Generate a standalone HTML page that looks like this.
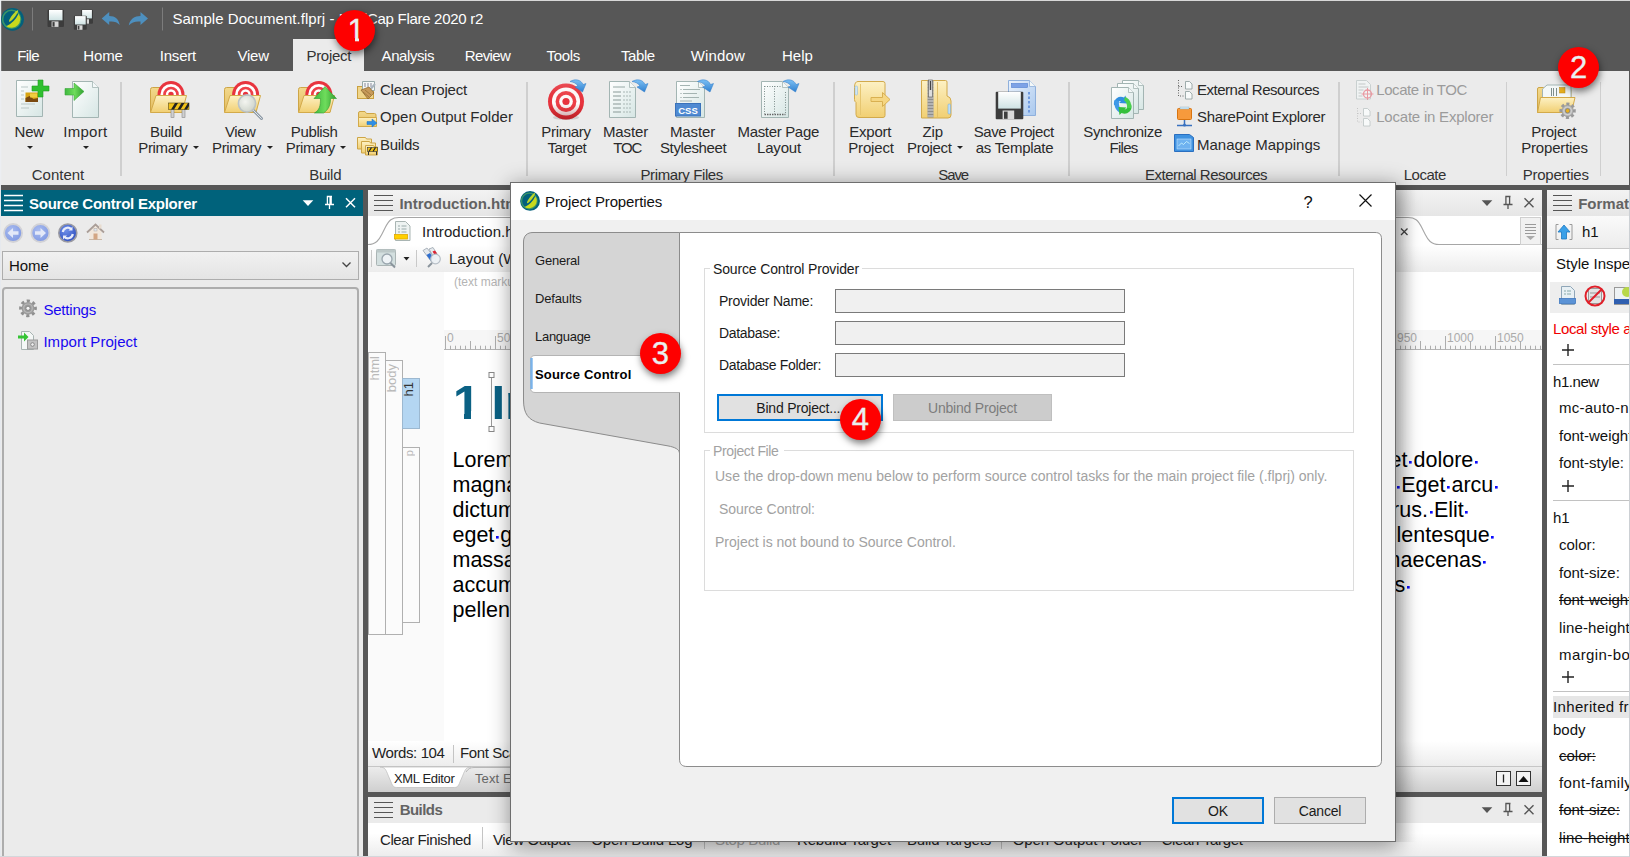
<!DOCTYPE html>
<html><head><meta charset="utf-8"><title>Project Properties</title>
<style>
*{box-sizing:border-box;margin:0;padding:0}
html,body{width:1630px;height:857px;overflow:hidden}
body{background:#575757;font-family:"Liberation Sans",sans-serif;font-size:15px;color:#222;position:relative}
.a{position:absolute;white-space:pre}
.t{position:absolute;white-space:pre;line-height:18px;height:18px}
.c{text-align:center}
#ribbon{left:1px;top:71px;width:1627.500px;height:114px;background:#ebebeb}
.sep{position:absolute;width:2px;background:#cfcfcf;top:82px;height:94px}
.gl{color:#333}
.badge{position:absolute;width:41px;height:41px;border-radius:50%;background:#fe0000;color:#e9f0f0;font-size:31px;line-height:41px;text-align:center;box-shadow:1px 3.500px 7px rgba(0,0,0,.5);-webkit-text-stroke:.35px #e9f0f0}
.badge i{position:absolute;background:#fe0000}
.mi{top:47px;color:#fff}
.bl{color:#2a2a2a}
.d13{font-size:13px;color:#1a1a1a}
.d14{font-size:14px;color:#1a1a1a}
.g{color:#a2a2a2}
.vt{writing-mode:vertical-rl;transform:rotate(180deg);font-size:13px;line-height:17px;text-align:right;white-space:pre}
.p{font-size:21.500px;line-height:25px;color:#000}
.sp{display:inline-block;width:5.950px;height:3px;vertical-align:3.500px;background:linear-gradient(#0c0cff,#0c0cff) center/2.700px 2.600px no-repeat}
.dd{position:absolute;width:0;height:0;border-left:3.300px solid transparent;border-right:3.300px solid transparent;border-top:3.700px solid #222;margin:.3px 0 0 .7px}
</style></head><body>
<!-- TITLEBAR -->
<div class="t" style="left:172.400px;top:10px;color:#fff;letter-spacing:0.05px">Sample Document.flprj - </div><div class="t" style="left:338.700px;top:10px;color:#fff;letter-spacing:-0.29px">MadCap Flare 2020 r2</div>
<!-- MENU -->
<div class="a" style="left:293px;top:39px;width:71px;height:33px;background:#ebebeb"></div>
<div class="t mi" style="left:17.2px;letter-spacing:-0.57px">File</div>
<div class="t mi" style="left:83.2px;letter-spacing:-0.08px">Home</div>
<div class="t mi" style="left:159.7px;letter-spacing:-0.19px">Insert</div>
<div class="t mi" style="left:237.5px;letter-spacing:-0.26px">View</div>
<div class="t mi" style="left:306.4px;color:#333;letter-spacing:-0.27px">Project</div>
<div class="t mi" style="left:381.6px;letter-spacing:-0.43px">Analysis</div>
<div class="t mi" style="left:464.8px;letter-spacing:-0.63px">Review</div>
<div class="t mi" style="left:546.5px;letter-spacing:-0.29px">Tools</div>
<div class="t mi" style="left:621px;letter-spacing:-0.43px">Table</div>
<div class="t mi" style="left:690.7px;letter-spacing:0.16px">Window</div>
<div class="t mi" style="left:782.1px;letter-spacing:-0.06px">Help</div>
<!-- RIBBON -->
<div id="ribbon" class="a"></div>
<div class="sep" style="left:120px;width:2px"></div>
<div class="sep" style="left:526px;width:2px"></div>
<div class="sep" style="left:833px;width:2px"></div>
<div class="sep" style="left:1068px;width:2px"></div>
<div class="sep" style="left:1338px;width:2px"></div>
<div class="sep" style="left:1506px;width:1px"></div>
<div class="sep" style="left:1600px;width:1px"></div>
<div class="t bl" style="left:14.5px;top:123px;letter-spacing:-0.17px">New</div>
<div class="t bl" style="left:63.25px;top:123px;letter-spacing:0.29px">Import</div>
<div class="dd" style="left:26.5px;top:146px"></div>
<div class="dd" style="left:82px;top:146px"></div>
<div class="t bl" style="left:150px;top:123px;letter-spacing:-0.27px">Build</div>
<div class="t bl" style="left:138.25px;top:139px;letter-spacing:-0.35px">Primary</div>
<div class="dd" style="left:192.2px;top:146px"></div>
<div class="t bl" style="left:225px;top:123px;letter-spacing:-0.44px">View</div>
<div class="t bl" style="left:212px;top:139px;letter-spacing:-0.35px">Primary</div>
<div class="dd" style="left:266px;top:146px"></div>
<div class="t bl" style="left:290.75px;top:123px;letter-spacing:-0.35px">Publish</div>
<div class="t bl" style="left:285.75px;top:139px;letter-spacing:-0.35px">Primary</div>
<div class="dd" style="left:339.7px;top:146px"></div>
<div class="t bl" style="left:380px;top:81px;letter-spacing:-0.25px">Clean Project</div>
<div class="t bl" style="left:380px;top:108px;letter-spacing:0.02px">Open Output Folder</div>
<div class="t bl" style="left:380px;top:136px;letter-spacing:-0.27px">Builds</div>
<div class="t bl" style="left:541.25px;top:123px;letter-spacing:-0.31px">Primary</div>
<div class="t bl" style="left:547.5px;top:139px;letter-spacing:-0.49px">Target</div>
<div class="t bl" style="left:603px;top:123px;letter-spacing:-0.14px">Master</div>
<div class="t bl" style="left:613.25px;top:139px;letter-spacing:-1.20px">TOC</div>
<div class="t bl" style="left:670px;top:123px;letter-spacing:-0.14px">Master</div>
<div class="t bl" style="left:660px;top:139px;letter-spacing:-0.38px">Stylesheet</div>
<div class="t bl" style="left:737.5px;top:123px;letter-spacing:-0.33px">Master Page</div>
<div class="t bl" style="left:757px;top:139px;letter-spacing:-0.17px">Layout</div>
<div class="t bl" style="left:849.25px;top:123px;letter-spacing:-0.23px">Export</div>
<div class="t bl" style="left:848.25px;top:139px;letter-spacing:-0.17px">Project</div>
<div class="t bl" style="left:922.5px;top:123px;letter-spacing:-0.11px">Zip</div>
<div class="t bl" style="left:907px;top:139px;letter-spacing:-0.28px">Project</div>
<div class="dd" style="left:956.7px;top:146px"></div>
<div class="t bl" style="left:973.75px;top:123px;letter-spacing:-0.42px">Save Project</div>
<div class="t bl" style="left:975.75px;top:139px;letter-spacing:-0.28px">as Template</div>
<div class="t bl" style="left:1083.25px;top:123px;letter-spacing:-0.35px">Synchronize</div>
<div class="t bl" style="left:1109.5px;top:139px;letter-spacing:-0.73px">Files</div>
<div class="t bl" style="left:1197px;top:81px;letter-spacing:-0.49px">External Resources</div>
<div class="t bl" style="left:1197px;top:108px;letter-spacing:-0.32px">SharePoint Explorer</div>
<div class="t bl" style="left:1197px;top:136px;letter-spacing:-0.01px">Manage Mappings</div>
<div class="t" style="left:1376.25px;top:81px;color:#9b9b9b;letter-spacing:-0.42px">Locate in TOC</div>
<div class="t" style="left:1376.25px;top:108px;color:#9b9b9b;letter-spacing:-0.22px">Locate in Explorer</div>
<div class="t bl" style="left:1531.25px;top:123px;letter-spacing:-0.24px">Project</div>
<div class="t bl" style="left:1521.25px;top:139px;letter-spacing:-0.19px">Properties</div>
<div class="t gl" style="left:31.75px;top:165.700px;letter-spacing:-0.01px">Content</div>
<div class="t gl" style="left:309.25px;top:165.700px;letter-spacing:-0.27px">Build</div>
<div class="t gl" style="left:640.5px;top:165.700px;letter-spacing:-0.39px">Primary Files</div>
<div class="t gl" style="left:938.25px;top:165.700px;letter-spacing:-1.11px">Save</div>
<div class="t gl" style="left:1145px;top:165.700px;letter-spacing:-0.49px">External Resources</div>
<div class="t gl" style="left:1403.75px;top:165.700px;letter-spacing:-0.51px">Locate</div>
<div class="t gl" style="left:1522.75px;top:165.700px;letter-spacing:-0.24px">Properties</div>

<svg class="a" style="left:0;top:0" width="1630" height="185" viewBox="0 0 1630 185">
<defs>
<linearGradient id="gp" x1="0" y1="0" x2="1" y2="1"><stop offset="0" stop-color="#ffffff"/><stop offset="1" stop-color="#d6e6e4"/></linearGradient>
<linearGradient id="gf" x1="0" y1="0" x2="0" y2="1"><stop offset="0" stop-color="#fdf1c4"/><stop offset="1" stop-color="#f1cf72"/></linearGradient>
<linearGradient id="gfb" x1="0" y1="0" x2="0" y2="1"><stop offset="0" stop-color="#f3d98c"/><stop offset="1" stop-color="#e2bb5e"/></linearGradient>
<linearGradient id="gg" x1="0" y1="0" x2="1" y2="0"><stop offset="0" stop-color="#3fb83f"/><stop offset=".5" stop-color="#6fdc5c"/><stop offset="1" stop-color="#2fa02f"/></linearGradient>
<linearGradient id="gb" x1="0" y1="0" x2="0" y2="1"><stop offset="0" stop-color="#7cc0f4"/><stop offset="1" stop-color="#2f80d0"/></linearGradient>
<linearGradient id="gbl" x1="0" y1="0" x2="1" y2="1"><stop offset="0" stop-color="#eaf2fc"/><stop offset="1" stop-color="#a9c8ee"/></linearGradient>
<linearGradient id="gw" x1="0" y1="0" x2="0" y2="1"><stop offset="0" stop-color="#ffffff"/><stop offset="1" stop-color="#cfe3e4"/></linearGradient>
<linearGradient id="gs" x1="0" y1="0" x2="0" y2="1"><stop offset="0" stop-color="#fff" stop-opacity=".12"/><stop offset=".55" stop-color="#800" stop-opacity="0"/><stop offset="1" stop-color="#600" stop-opacity=".38"/></linearGradient>
<radialGradient id="gm" cx=".4" cy=".4" r=".6"><stop offset="0" stop-color="#f4f6f4"/><stop offset="1" stop-color="#cfd6d0"/></radialGradient>
<clipPath id="ctop"><rect x="0" y="0" width="1630" height="96"/></clipPath>
</defs>
<rect x="0" y="0" width="1630" height="1" fill="#d8d8d8"/><rect x="0" y="0" width="1.200" height="185" fill="#eceef2"/>
<circle cx="12.500" cy="19.300" r="11.400" fill="#03607c"/><circle cx="11.600" cy="19.300" r="9" fill="none" stroke="#3b9467" stroke-width="1.600"/>
<path d="M6.300 26.200Q14.500 22.500 18.600 13.800A8.850 8.850 0 0 1 6.300 26.200z" fill="#c8d91d"/><ellipse cx="13.600" cy="16" rx="7.300" ry="1.550" transform="rotate(-52 13.600 16)" fill="#bcd62a"/>
<path d="M32.500 7.500v23M162.500 7.500v23" stroke="#7c7c7c" stroke-width="1"/>
<rect x="47.5" y="9.7" width="16.5" height="17.2" rx="1" fill="#3c3c3c"/><rect x="49.0" y="10.0" width="13.5" height="10.3" fill="url(#gw)"/><rect x="51.6" y="21.4" width="6.9" height="5.5" fill="#d8d8d8"/><rect x="52.5" y="22.1" width="2.1" height="4.5" fill="#3c3c3c"/>
<rect x="81" y="9.7" width="12" height="14" rx="1" fill="#3c3c3c"/><rect x="82.1" y="10.0" width="9.8" height="8.4" fill="url(#gw)"/><rect x="84.0" y="19.2" width="5.0" height="4.5" fill="#d8d8d8"/><rect x="84.6" y="19.8" width="1.6" height="3.6" fill="#3c3c3c"/>
<rect x="73.8" y="15.8" width="13" height="14" rx="1" fill="#3c3c3c"/><rect x="75.0" y="16.1" width="10.7" height="8.4" fill="url(#gw)"/><rect x="77.0" y="25.3" width="5.5" height="4.5" fill="#d8d8d8"/><rect x="77.7" y="25.9" width="1.7" height="3.6" fill="#3c3c3c"/>
<path d="M101.700 18.500l7.500-6.500v4c6 0 9.500 3 10.500 9c-2.500-3-6-4-10.500-3.500v3.500z" fill="#4d8fbe"/>
<path d="M148 18.500l-7.500-6.500v4c-6 0-10.500 3-11.800 9.500c3-3.500 7-4.500 11.800-4v3.500z" fill="#4d8fbe"/>
<path d="M16.5 80.5h26l0 0v36h-26z" fill="url(#gp)" stroke="#a3b5b3"/><path d="M42.5 80.5v0h0" fill="#f4f8f8" stroke="#a3b5b3" stroke-width=".8"/>
<path d="M21 87h7M21 91h3M21 95h3M21 99h3M21 104h14M21 108h8" stroke="#b9c7c6" stroke-width="1"/>
<rect x="25.500" y="92.500" width="12.500" height="9.500" fill="#d9a514"/><path d="M25.500 102v-4l4-2 4 3 4.500-1v4z" fill="#7a4a10"/><rect x="30" y="93.500" width="7" height="4" fill="#f6d84a" opacity=".8"/>
<path d="M38 80h5v6h6v5h-6v6h-5v-6h-6v-5h6z" fill="#2fc02f" stroke="#1f9a1f" stroke-width=".6"/>
<path d="M72.5 81.5h20l6 6v30h-26z" fill="url(#gp)" stroke="#a3b5b3"/><path d="M92.5 81.5v6h6" fill="#f4f8f8" stroke="#a3b5b3" stroke-width=".8"/>
<path d="M65 88.500h9v-5.500l10 8.500-10 9v-5.500h-9z" fill="url(#gg)" stroke="#3aa83a" stroke-width=".6"/>
<path d="M150.5 89.5q0-2 2-2h8l2.500 3h17q2 0 2 2v19.5h-31.5z" fill="url(#gfb)" stroke="#cda546"/>
<g clip-path="url(#ctop)"><circle cx="171" cy="94.5" r="13.50" fill="#e8343e"/><circle cx="171" cy="94.5" r="10.53" fill="#fff"/><circle cx="171" cy="94.5" r="7.83" fill="#ee4048"/><circle cx="171" cy="94.5" r="5.13" fill="#fff"/><circle cx="171" cy="94.5" r="2.70" fill="#e8343e"/></g>
<path d="M150.5 112.5l5.500-17.0h30.5l-4.500 17.0z" fill="url(#gf)" stroke="#d3aa4a"/>
<rect x="171" y="109" width="3" height="8.500" fill="#d0d0d0" stroke="#888" stroke-width=".6"/><rect x="182" y="109" width="3" height="8.500" fill="#d0d0d0" stroke="#888" stroke-width=".6"/>
<rect x="168.500" y="103" width="20.500" height="6.500" fill="#f2c21a" stroke="#5a4a10" stroke-width=".6"/><path d="M171 109.500l4-6.500h3l-4 6.500zM177.500 109.500l4-6.500h3l-4 6.500zM184 109.500l4-6.500h1v3l-2 3.500z" fill="#222"/>
<path d="M224.5 89.5q0-2 2-2h8l2.500 3h17q2 0 2 2v19.5h-31.5z" fill="url(#gfb)" stroke="#cda546"/>
<g clip-path="url(#ctop)"><circle cx="245.6" cy="94.5" r="13.50" fill="#e8343e"/><circle cx="245.6" cy="94.5" r="10.53" fill="#fff"/><circle cx="245.6" cy="94.5" r="7.83" fill="#ee4048"/><circle cx="245.6" cy="94.5" r="5.13" fill="#fff"/><circle cx="245.6" cy="94.5" r="2.70" fill="#e8343e"/></g>
<path d="M224.5 112.5l5.500-17.0h30.5l-4.500 17.0z" fill="url(#gf)" stroke="#d3aa4a"/>
<path d="M253 110l8.500 8.500" stroke="#8e9aa6" stroke-width="3" stroke-linecap="round"/><path d="M253 110l8.500 8.500" stroke="#dfe5ea" stroke-width="1" stroke-linecap="round"/><circle cx="247" cy="103.500" r="8.600" fill="url(#gm)" stroke="#b9c2c8" stroke-width="1.600" opacity=".96"/>
<path d="M298.5 89.5q0-2 2-2h8l2.500 3h17q2 0 2 2v19.5h-31.5z" fill="url(#gfb)" stroke="#cda546"/>
<g clip-path="url(#ctop)"><circle cx="318.8" cy="94.5" r="13.50" fill="#e8343e"/><circle cx="318.8" cy="94.5" r="10.53" fill="#fff"/><circle cx="318.8" cy="94.5" r="7.83" fill="#ee4048"/><circle cx="318.8" cy="94.5" r="5.13" fill="#fff"/><circle cx="318.8" cy="94.5" r="2.70" fill="#e8343e"/></g>
<path d="M298.5 112.5l5.500-17.0h30.5l-4.500 17.0z" fill="url(#gf)" stroke="#d3aa4a"/>
<path d="M314 98.500l11-12 11.500 12h-6c0 7-2 11-7 14.500h-9c5-3 6-7 6-14.500z" fill="url(#gg)" stroke="#2f9a2f" stroke-width=".6"/>
<rect x="357.500" y="86.500" width="16" height="12" fill="#f0d58a" stroke="#c9a040"/><path d="M362.500 81.500h12v9h-12z" fill="#f4f8f8" stroke="#9aa"/><path d="M365 83v4M368 83v4M371 83v4" stroke="#889"/>
<path d="M375 84l-7 8" stroke="#a9b4be" stroke-width="2"/><path d="M361 90l8-3 5 6-6 6z" fill="#c79a5a" stroke="#8a6428" stroke-width=".7"/><path d="M363 92l6 5M365 90l6 5" stroke="#8a6428" stroke-width=".6"/>
<path d="M358.500 113q0-1.500 1.500-1.500h5l1.500 2h8q1.500 0 1.500 1.500v11.500h-17.500z" fill="url(#gfb)" stroke="#cda546"/><path d="M358.500 126.500v-9h18v9z" fill="url(#gf)" stroke="#d3aa4a"/>
<path d="M367 121.500h5v-2.500l5 4-5 4v-2.500h-5z" fill="#2e8fe6" stroke="#1c6fc0" stroke-width=".5"/>
<path d="M357.500 137.500h8l1 1.500h5v10h-14z" fill="url(#gf)" stroke="#cda546"/><path d="M361.500 141.500h8l1 1.500h5v10h-14z" fill="url(#gf)" stroke="#cda546"/><path d="M365.500 145.500h8l1 1.500h3v8h-12z" fill="url(#gf)" stroke="#cda546"/>
<rect x="367.500" y="147.500" width="10" height="4" fill="#f2c21a" stroke="#333" stroke-width=".6"/><path d="M369 151.500l2.500-4M373 151.500l2.500-4" stroke="#222" stroke-width="1.200"/><path d="M368.500 151.500v3.500M376.500 151.500v3.500" stroke="#333"/>
<ellipse cx="566" cy="117.500" rx="13" ry="2.500" fill="#000" opacity=".12"/>
<g><circle cx="566" cy="101.5" r="18.00" fill="#e8343e"/><circle cx="566" cy="101.5" r="14.04" fill="#fff"/><circle cx="566" cy="101.5" r="10.44" fill="#ee4048"/><circle cx="566" cy="101.5" r="6.84" fill="#fff"/><circle cx="566" cy="101.5" r="3.60" fill="#e8343e"/></g>
<circle cx="566" cy="101.500" r="18" fill="url(#gs)"/>
<path d="M570 81.5c5-3 11-2 13 3l3-1-3.500 8.500-7.500-5 3-1c-2-3-5-4-8-4.500z" fill="url(#gb)" stroke="#2a78c8" stroke-width=".5"/>
<path d="M609.5 81.5h20l6 6v30h-26z" fill="url(#gp)" stroke="#a3b5b3"/><path d="M629.5 81.5v6h6" fill="#f4f8f8" stroke="#a3b5b3" stroke-width=".8"/>
<path d="M613 87h12" stroke="#97a8a6"/><path d="M613 92h8M613 96h8M613 100h8M613 104h8M613 108h8M613 112h8" stroke="#8a9a98" stroke-width="1.200"/><path d="M623 92h9M623 96h9M623 100h9M623 104h9M623 108h9M623 112h9" stroke="#a8b6b4" stroke-dasharray="2 1"/>
<path d="M632 81.5c5-3 11-2 13 3l3-1-3.500 8.500-7.500-5 3-1c-2-3-5-4-8-4.500z" fill="url(#gb)" stroke="#2a78c8" stroke-width=".5"/>
<path d="M676.5 81.5h22l6 6v30h-28z" fill="url(#gp)" stroke="#a3b5b3"/><path d="M698.5 81.5v6h6" fill="#f4f8f8" stroke="#a3b5b3" stroke-width=".8"/>
<path d="M680 85.500h10M683 89.500h17M683 93.500h14M683 97.500h16M680 101h12" stroke="#a4b4b2"/><path d="M680.500 89.500h1M680.500 93.500h1M680.500 97.500h1" stroke="#899"/>
<rect x="675.500" y="103.500" width="25" height="12.500" fill="#4f8ad2" stroke="#3a72ba"/><text x="688" y="113.500" font-family="Liberation Sans,sans-serif" font-size="9.500" fill="#fff" text-anchor="middle" font-weight="700">CSS</text>
<path d="M697.5 81.5c5-3 11-2 13 3l3-1-3.500 8.500-7.500-5 3-1c-2-3-5-4-8-4.500z" fill="url(#gb)" stroke="#2a78c8" stroke-width=".5"/>
<path d="M761.5 81.5h21l6 6v30h-27z" fill="url(#gp)" stroke="#a3b5b3"/><path d="M782.5 81.5v6h6" fill="#f4f8f8" stroke="#a3b5b3" stroke-width=".8"/>
<path d="M764.500 86v28M774.500 86v28M785.500 92v22M764.500 86.500h16" stroke="#7f8f8d" stroke-dasharray="1 1.500" fill="none"/><path d="M764.500 114.500h21" stroke="#666" stroke-dasharray="1.500 1" stroke-width="1.500"/>
<path d="M783 81.5c5-3 11-2 13 3l3-1-3.500 8.500-7.500-5 3-1c-2-3-5-4-8-4.500z" fill="url(#gb)" stroke="#2a78c8" stroke-width=".5"/>
<path d="M858 81.500h25q2 0 2 2v32q0 2-2 2h-24q-3 0-3-3v-12q-1.500-1-1.500-3v-12q0-6 3.500-6z" fill="url(#gf)" stroke="#d2aa4c"/><path d="M860.500 84v31" stroke="#e6c670"/>
<rect x="855" y="86" width="2.500" height="9" rx="1" fill="#cfe6f6" stroke="#8ab4d6" stroke-width=".5"/>
<path d="M871 97.500h11.500v-5l7.500 7-7.500 7v-5h-11.500z" fill="#f5d682" stroke="#d9b050"/>
<path d="M921.500 80.500h24q1.500 0 1.500 1.500v14q4 1 4 5v14q0 3-3 3h-26.500z" fill="url(#gf)" stroke="#d2aa4c"/><path d="M937.500 82v35" stroke="#e2c068"/>
<rect x="927.500" y="80.500" width="6" height="37" fill="#8d8d8d"/><path d="M927.500 83h6M927.500 86h6M927.500 89h6M927.500 92h6M927.500 95h6M927.500 98h6M927.500 101h6M927.500 104h6M927.500 107h6M927.500 110h6M927.500 113h6M927.500 116h6" stroke="#d9d9d9"/><rect x="928.500" y="80" width="4" height="17" fill="#ddd" stroke="#666" stroke-width=".7"/><path d="M930.500 81v9" stroke="#444" stroke-width="1.400"/>
<rect x="948" y="104" width="2.500" height="10" rx="1" fill="#bfe0f8" stroke="#6aa4d6" stroke-width=".5"/>
<path d="M1008.5 80.5h21l6 6v29h-27z" fill="url(#gbl)" stroke="#8fb0dc"/><path d="M1029.5 80.5v6h6" fill="#f4f8f8" stroke="#8fb0dc" stroke-width=".8"/>
<rect x="1011.500" y="83.500" width="16" height="4" fill="#7da2e6" stroke="#4f7fd0" stroke-width=".6"/><path d="M1015 92v22M1022 92v22M1029 92v22" stroke="#6f9ae0" stroke-width="2" stroke-dasharray="2.500 2"/>
<rect x="995.7" y="91.7" width="27.6" height="27.6" rx="1" fill="#3c3c3c"/><rect x="998.2" y="92.0" width="22.6" height="16.6" fill="url(#gw)"/><rect x="1002.6" y="110.5" width="11.6" height="8.8" fill="#d8d8d8"/><rect x="1004.0" y="111.6" width="3.6" height="7.2" fill="#3c3c3c"/>
<path d="M1122.5 80.5h16l5 5v24h-21z" fill="url(#gp)" stroke="#a3b5b3"/><path d="M1138.5 80.5v5h5" fill="#f4f8f8" stroke="#a3b5b3" stroke-width=".8"/>
<path d="M1117.5 83.5h16l5 5v25h-21z" fill="url(#gp)" stroke="#a3b5b3"/><path d="M1133.5 83.5v5h5" fill="#f4f8f8" stroke="#a3b5b3" stroke-width=".8"/>
<path d="M1111.5 87.5h17l5 5v26h-22z" fill="url(#gp)" stroke="#a3b5b3"/><path d="M1128.5 87.5v5h5" fill="#f4f8f8" stroke="#a3b5b3" stroke-width=".8"/>
<path d="M1114 105a7 7 0 0 1 10-7.500l1.500-2 1.500 8-8-.5 2-2a4 4 0 0 0-4 4.500z" fill="#2f8fe0"/><path d="M1114.500 100c-1 5 1 11 6 13l1-4c-2-1-3-4-2.500-8z" fill="#3f9ae8"/>
<path d="M1131 104a7 7 0 0 1-9.500 9l-2 2-1-8 8 .5-2 2a4 4 0 0 0 3-4.500z" fill="#34c03c"/><path d="M1131 108c1-5-2-10-6-11l-1 3.500c2 1 3.500 4 3 7.500z" fill="#4ad04e"/>
<path d="M1178.500 80v16h5M1178.500 86.500h5" stroke="#666" stroke-dasharray="1 1.500" fill="none"/>
<path d="M1185.500 81.500h4l2.500 2.500v5h-6.500z" fill="#f8fafa" stroke="#8a9a9a" stroke-width=".8"/><path d="M1185.500 91.500h4l2.500 2.500v5h-6.500z" fill="#f8fafa" stroke="#8a9a9a" stroke-width=".8"/>
<rect x="1177.500" y="108.500" width="14" height="11" rx="1" fill="#f79a3c" stroke="#d87410"/><rect x="1180" y="107" width="9" height="2" fill="#cfe8f8" stroke="#8ab" stroke-width=".4"/><path d="M1184.500 120v4M1177 125.500h15" stroke="#3a72c0" stroke-width="1.500"/><circle cx="1184.500" cy="125" r="1.500" fill="#3a72c0"/>
<path d="M1174.500 134.500h15l4 3v14h-19z" fill="#3f92e0" stroke="#2a6fc0"/><rect x="1177" y="139" width="14" height="10" fill="#6fb2f0" stroke="#bfe0ff" stroke-width=".6"/><path d="M1178.500 146l3-3 2 1.500 3-3 3 2" stroke="#dff" stroke-width=".7" fill="none"/>
<path d="M1356.500 80.500h10l4 4v14.500h-14z" fill="#f0f3f3" stroke="#c9d0d0"/><path d="M1358.500 84h7M1358.500 87h10M1358.500 90h5M1358.500 93h3M1358.500 96h4" stroke="#c4caca" stroke-width="1.200"/>
<circle cx="1367.500" cy="94" r="4" fill="none" stroke="#e99aa2" stroke-width="1.300"/><path d="M1367.500 88v12M1361.500 94h12" stroke="#e99aa2" stroke-width="1"/>
<path d="M1357.500 108v14h4M1357.500 113.500h4" stroke="#c4c4c4" stroke-dasharray="1 1.500" fill="none"/>
<path d="M1363.500 108.500h4l2.500 2.500v5h-6.500z" fill="#f8fafa" stroke="#bcc4c4" stroke-width=".8"/><path d="M1363.500 118.500h4l2.500 2.500v5h-6.500z" fill="#f8fafa" stroke="#bcc4c4" stroke-width=".8"/>
<path d="M1537.500 112.500v-23.500q0-1.500 1.500-1.500h4.500l1.500 2h26v23z" fill="url(#gfb)" stroke="#cda546"/>
<path d="M1542.500 101v-12l4.500-4h24v16z" fill="#f4f8f8" stroke="#a3b5b3"/><path d="M1551.500 88v8M1553.500 88v8M1556.500 88v8" stroke="#7f8f8d"/><path d="M1549 98.500h20" stroke="#9aa" stroke-dasharray="1.500 1"/><rect x="1559.500" y="87.500" width="5.500" height="5.500" fill="#e8b020" stroke="#b88410" stroke-width=".5"/>
<path d="M1537.500 112.500l3-15h34.500l-3.500 15z" fill="url(#gf)" stroke="#d3aa4a"/>
<circle cx="1567.600" cy="110.800" r="6.600" fill="none" stroke="#9a9a9a" stroke-width="3.200" stroke-dasharray="2.900 2.280" transform="rotate(-12 1567.600 110.800)"/><circle cx="1567.600" cy="110.800" r="5.800" fill="#b4b4b4" stroke="#8e8e8e" stroke-width=".6"/><circle cx="1567.600" cy="110.800" r="3.800" fill="none" stroke="#d2d2d2" stroke-width="1.200"/><circle cx="1567.600" cy="110.800" r="2.200" fill="#e8b020" stroke="#7a7a7a" stroke-width=".7"/>
</svg>

<div class="a" id="leftborder" style="left:0;top:185px;width:1.200px;height:672px;background:#e6e9ee"></div>
<!-- LEFT PANEL -->
<div class="a" style="left:1px;top:190px;width:362px;height:667px;background:#ebebeb"></div>
<div class="a" style="left:1px;top:190px;width:362px;height:26px;background:#00627b"></div>
<svg class="a" style="left:0;top:185px" width="364" height="70" viewBox="0 185 364 70">
 <g stroke="#fff" stroke-width="1.3"><path d="M4 195.5h19M4 200.5h19M4 205.5h19M4 210.5h19"/></g>
 <path d="M302.700 200.200h10.600l-5.300 5.800z" fill="#fff"/>
 <g stroke="#fff" stroke-width="1.3" fill="none"><path d="M326.8 196.5h5.200M327.4 196.5v8M331.1 196.5v8M325 204.5h9M329.5 204.5v4.600"/><path d="M330.4 196.5v8" stroke-width="2"/><path d="M346 198.300l9 9M355 198.300l-9 9" stroke-width="1.5"/></g>
 <defs><radialGradient id="bb" cx=".4" cy=".35" r=".7"><stop offset="0" stop-color="#a9bcf0"/><stop offset="1" stop-color="#7f98e2"/></radialGradient>
 <radialGradient id="bb2" cx=".4" cy=".35" r=".7"><stop offset="0" stop-color="#6f8fe8"/><stop offset="1" stop-color="#2f4fc0"/></radialGradient></defs>
 <circle cx="13.100" cy="233" r="9" fill="url(#bb)" stroke="#d2d2d6" stroke-width="1.800"/>
 <path d="M7.500 233l5.500-5v3.200h5.500v3.600h-5.500v3.200z" fill="#e4e9f8"/>
 <circle cx="40.400" cy="233" r="9" fill="url(#bb)" stroke="#d2d2d6" stroke-width="1.800"/>
 <path d="M46 233l-5.500-5v3.200h-5.500v3.600h5.500v3.200z" fill="#e4e9f8"/>
 <circle cx="67.800" cy="233" r="9" fill="url(#bb2)" stroke="#9a9aa2" stroke-width="1.600"/>
 <path d="M62.800 232a5 5 0 0 1 8.500-2.800M72.800 234a5 5 0 0 1-8.500 2.800" stroke="#e8ecfa" stroke-width="2.200" fill="none"/><path d="M72.500 226.500v4h-4zM63 239.500v-4h4z" fill="#e8ecfa"/>
 <path d="M89.500 231v8.500h12v-8.500l-6-5.500z" fill="#f1e7dc"/><path d="M87 232.500l8.500-8 8.500 8" fill="none" stroke="#aa9e98" stroke-width="1.800"/><rect x="99" y="224.500" width="2.500" height="4" fill="#e8dccf"/><path d="M89 239.500h13" stroke="#c9b8a8"/>
 <rect x="93.500" y="233.500" width="4" height="6" fill="#d3a683"/><rect x="94" y="228.500" width="3" height="2.500" fill="#dfe6f0" stroke="#b0a8a0" stroke-width=".5"/>
</svg>
<div class="t" style="left:29px;top:195px;color:#fff;font-weight:700;letter-spacing:-.24px">Source Control Explorer</div>
<div class="a" style="left:2px;top:251px;width:357px;height:28.500px;border:1px solid #adadad;background:linear-gradient(#f1f1f1,#e4e4e4)"></div>
<div class="t" style="left:9px;top:257px;color:#111;letter-spacing:-.05px">Home</div>
<svg class="a" style="left:341px;top:261px" width="12" height="8"><path d="M1.500 1.500l4 4 4-4" stroke="#444" stroke-width="1.300" fill="none"/></svg>
<div class="a" style="left:2px;top:287px;width:357px;height:580px;border:2px solid #adadad;border-radius:4px;background:#ebebeb"></div>
<div class="t" style="left:43.400px;top:300.500px;color:#1808f0;letter-spacing:-0.19px">Settings</div>
<div class="t" style="left:43.400px;top:332.800px;color:#1808f0;letter-spacing:0.04px">Import Project</div>
<svg class="a" style="left:17px;top:297px" width="24" height="60" viewBox="17 297 24 60">
 <circle cx="28" cy="308.300" r="7.300" fill="none" stroke="#909090" stroke-width="3.200" stroke-dasharray="3 2.730" transform="rotate(-11 28 308.300)"/><circle cx="28" cy="308.300" r="6.400" fill="#9c9c9c"/><circle cx="28" cy="308.300" r="4.300" fill="none" stroke="#b9b9b9" stroke-width="1.200"/><circle cx="28" cy="308.300" r="2.100" fill="#f4f4f4" stroke="#7a7a7a" stroke-width=".8"/>
 <path d="M21.500 331.500h8l4 4v14h-12z" fill="#f4f7f6" stroke="#a8b4b2"/>
 <rect x="27.500" y="340" width="10" height="9" fill="#c2c2c2" stroke="#9a9a9a"/>
 <circle cx="32.500" cy="344.500" r="1.800" fill="#eee" stroke="#777" stroke-width=".8"/>
 <path d="M18 335.500h6v-3l4.500 4.500-4.500 4.500v-3h-6z" fill="#35c435"/>
</svg>
<!-- EDITOR PANEL -->
<div class="a" style="left:368px;top:190px;width:1174px;height:602px;background:#fff"></div>
<div class="a" style="left:368px;top:190px;width:1174px;height:26px;background:linear-gradient(#f3f3f3,#e6e6e6)"></div>
<div class="t" style="left:399.400px;top:194.500px;color:#636363;font-weight:700;font-size:15px">Introduction.htm</div>
<div class="a" style="left:368px;top:216px;width:1174px;height:29px;background:#fff;border-bottom:1px solid #c4caca"></div>
<svg class="a" style="left:368px;top:190px" width="1174" height="84" viewBox="368 190 1174 84">
 <g stroke="#555" stroke-width="1.200"><path d="M374 195.500h19M374 200.500h19M374 205.500h19M374 210.500h19"/></g>
 <path d="M368 245v-1c8 0 11-4 14-10l3-6c4-8 7-10.500 14-10.500h1009c7 0 10 2.500 14 10.500l3 6c3 6 6 10 14 10h0v1z" fill="#fff"/>
 <path d="M368 244.500c8 0 11-4.500 14-10.500l3-6c4-8 7-10.500 14-10.500h1009c7 0 10 2.500 14 10.500l3 6c3 6 6 10.500 14 10.500h81" fill="none" stroke="#a6a6a6" stroke-width="1.100"/>
 <path d="M395.500 221.500h10l4.500 4.500v14.500h-14.500z" fill="#eef3f2" stroke="#a9b5b3"/>
 <path d="M398 226h2M401.500 226h5M398 229h2M401.500 229h5M398 232h2M401.500 232h5" stroke="#9aa" stroke-width="1"/>
 <rect x="394.500" y="234.500" width="13" height="4.500" fill="#ffd000" stroke="#e0a800" stroke-width=".8"/>
 <path d="M1401 228.500l6.500 6.500M1407.500 228.500l-6.500 6.500" stroke="#444" stroke-width="1.300"/>
 <rect x="1520.500" y="217.500" width="20" height="27" fill="#f1f1f1" stroke="#cfcfcf"/>
 <path d="M1525 224.500h11M1525 227.500h11M1525 230.500h11M1525 233.500h11" stroke="#9a9a9a"/><path d="M1526 236h9l-4.500 4z" fill="#aaa"/>
 <path d="M1481.700 200.200h10.600l-5.300 5.800z" fill="#555"/>
 <g stroke="#555" stroke-width="1.300" fill="none"><path d="M1505.3 196.5h5.200M1505.9 196.5v8M1509.6 196.5v8M1503.5 204.5h9M1508 204.5v4.600"/><path d="M1524.500 198.300l9 9M1533.500 198.300l-9 9" stroke-width="1.400"/></g>
</svg>
<div class="t" style="left:422px;top:222.500px;color:#222;letter-spacing:0.06px">Introduction.htm</div>
<div class="a" style="left:368px;top:245px;width:1174px;height:27px;background:linear-gradient(#fff,#ececec)"></div>
<svg class="a" style="left:368px;top:245px" width="80" height="27" viewBox="368 245 80 27">
 <path d="M371.500 250v17M416.500 250v17" stroke="#c9c9c9"/>
 <rect x="376.500" y="249.500" width="19" height="16" rx="1" fill="#d3dfdf" stroke="#aab4b4"/><rect x="376.500" y="249.500" width="19" height="3" fill="#bcc8c8"/>
 <circle cx="387" cy="259" r="5" fill="#eef3f6" stroke="#9aa6ae" stroke-width="1.300"/><path d="M390.500 263l4.500 4.500" stroke="#8a949c" stroke-width="2"/>
 <path d="M403.500 257h6l-3 3.500z" fill="#222"/>
 <path d="M423 250.500l4-2.500 9 12-4 2.500z" fill="#e6eaee" stroke="#9aa4ae" stroke-width=".8"/><path d="M426.500 255l3.500-2 4 5.500-3.500 2z" fill="#2f6fd0"/>
 <path d="M429 249l4-1.500 5 8-4 2z" fill="#e6eaee" stroke="#9aa4ae" stroke-width=".8"/><path d="M432.500 251.500l2.500-1 2 3-2.500 1.200z" fill="#e02030"/>
 <circle cx="435.500" cy="259" r="4.800" fill="#eef2f6" stroke="#b4bcc4" stroke-width="1.200" opacity=".95"/><path d="M432 263l-4 4" stroke="#8a949c" stroke-width="2"/>
</svg>
<div class="t" style="left:449px;top:250px;color:#222">Layout (Web)</div>
<div class="t" style="left:454px;top:273px;color:#b4b4b4;font-size:12px">(text markup hidden)</div>
<div class="a" style="left:444px;top:330px;width:1098px;height:20px;background:#f6f6f6;border-bottom:1px solid #b5b5b5"></div>
<svg class="a" style="left:0;top:330px" width="1630" height="20" viewBox="0 330 1630 20"><path d="M445.5 349.5v-13.5M450.5 349.5v-3.8M455.5 349.5v-3.8M460.5 349.5v-3.8M465.5 349.5v-3.8M470.5 349.5v-8.5M475.5 349.5v-3.8M480.5 349.5v-3.8M485.5 349.5v-3.8M490.5 349.5v-3.8M495.5 349.5v-13.5M500.5 349.5v-3.8M505.5 349.5v-3.8M510.5 349.5v-3.8M515.5 349.5v-3.8M520.5 349.5v-8.5M525.5 349.5v-3.8M530.5 349.5v-3.8M535.5 349.5v-3.8M540.5 349.5v-3.8M545.5 349.5v-13.5M550.5 349.5v-3.8M555.5 349.5v-3.8M560.5 349.5v-3.8M565.5 349.5v-3.8M570.5 349.5v-8.5M575.5 349.5v-3.8M580.5 349.5v-3.8M585.5 349.5v-3.8M590.5 349.5v-3.8M595.5 349.5v-13.5M600.5 349.5v-3.8M605.5 349.5v-3.8M610.5 349.5v-3.8M615.5 349.5v-3.8M620.5 349.5v-8.5M625.5 349.5v-3.8M630.5 349.5v-3.8M635.5 349.5v-3.8M640.5 349.5v-3.8M645.5 349.5v-13.5M650.5 349.5v-3.8M655.5 349.5v-3.8M660.5 349.5v-3.8M665.5 349.5v-3.8M670.5 349.5v-8.5M675.5 349.5v-3.8M680.5 349.5v-3.8M685.5 349.5v-3.8M690.5 349.5v-3.8M695.5 349.5v-13.5M700.5 349.5v-3.8M705.5 349.5v-3.8M710.5 349.5v-3.8M715.5 349.5v-3.8M720.5 349.5v-8.5M725.5 349.5v-3.8M730.5 349.5v-3.8M735.5 349.5v-3.8M740.5 349.5v-3.8M745.5 349.5v-13.5M750.5 349.5v-3.8M755.5 349.5v-3.8M760.5 349.5v-3.8M765.5 349.5v-3.8M770.5 349.5v-8.5M775.5 349.5v-3.8M780.5 349.5v-3.8M785.5 349.5v-3.8M790.5 349.5v-3.8M795.5 349.5v-13.5M800.5 349.5v-3.8M805.5 349.5v-3.8M810.5 349.5v-3.8M815.5 349.5v-3.8M820.5 349.5v-8.5M825.5 349.5v-3.8M830.5 349.5v-3.8M835.5 349.5v-3.8M840.5 349.5v-3.8M845.5 349.5v-13.5M850.5 349.5v-3.8M855.5 349.5v-3.8M860.5 349.5v-3.8M865.5 349.5v-3.8M870.5 349.5v-8.5M875.5 349.5v-3.8M880.5 349.5v-3.8M885.5 349.5v-3.8M890.5 349.5v-3.8M895.5 349.5v-13.5M900.5 349.5v-3.8M905.5 349.5v-3.8M910.5 349.5v-3.8M915.5 349.5v-3.8M920.5 349.5v-8.5M925.5 349.5v-3.8M930.5 349.5v-3.8M935.5 349.5v-3.8M940.5 349.5v-3.8M945.5 349.5v-13.5M950.5 349.5v-3.8M955.5 349.5v-3.8M960.5 349.5v-3.8M965.5 349.5v-3.8M970.5 349.5v-8.5M975.5 349.5v-3.8M980.5 349.5v-3.8M985.5 349.5v-3.8M990.5 349.5v-3.8M995.5 349.5v-13.5M1000.5 349.5v-3.8M1005.5 349.5v-3.8M1010.5 349.5v-3.8M1015.5 349.5v-3.8M1020.5 349.5v-8.5M1025.5 349.5v-3.8M1030.5 349.5v-3.8M1035.5 349.5v-3.8M1040.5 349.5v-3.8M1045.5 349.5v-13.5M1050.5 349.5v-3.8M1055.5 349.5v-3.8M1060.5 349.5v-3.8M1065.5 349.5v-3.8M1070.5 349.5v-8.5M1075.5 349.5v-3.8M1080.5 349.5v-3.8M1085.5 349.5v-3.8M1090.5 349.5v-3.8M1095.5 349.5v-13.5M1100.5 349.5v-3.8M1105.5 349.5v-3.8M1110.5 349.5v-3.8M1115.5 349.5v-3.8M1120.5 349.5v-8.5M1125.5 349.5v-3.8M1130.5 349.5v-3.8M1135.5 349.5v-3.8M1140.5 349.5v-3.8M1145.5 349.5v-13.5M1150.5 349.5v-3.8M1155.5 349.5v-3.8M1160.5 349.5v-3.8M1165.5 349.5v-3.8M1170.5 349.5v-8.5M1175.5 349.5v-3.8M1180.5 349.5v-3.8M1185.5 349.5v-3.8M1190.5 349.5v-3.8M1195.5 349.5v-13.5M1200.5 349.5v-3.8M1205.5 349.5v-3.8M1210.5 349.5v-3.8M1215.5 349.5v-3.8M1220.5 349.5v-8.5M1225.5 349.5v-3.8M1230.5 349.5v-3.8M1235.5 349.5v-3.8M1240.5 349.5v-3.8M1245.5 349.5v-13.5M1250.5 349.5v-3.8M1255.5 349.5v-3.8M1260.5 349.5v-3.8M1265.5 349.5v-3.8M1270.5 349.5v-8.5M1275.5 349.5v-3.8M1280.5 349.5v-3.8M1285.5 349.5v-3.8M1290.5 349.5v-3.8M1295.5 349.5v-13.5M1300.5 349.5v-3.8M1305.5 349.5v-3.8M1310.5 349.5v-3.8M1315.5 349.5v-3.8M1320.5 349.5v-8.5M1325.5 349.5v-3.8M1330.5 349.5v-3.8M1335.5 349.5v-3.8M1340.5 349.5v-3.8M1345.5 349.5v-13.5M1350.5 349.5v-3.8M1355.5 349.5v-3.8M1360.5 349.5v-3.8M1365.5 349.5v-3.8M1370.5 349.5v-8.5M1375.5 349.5v-3.8M1380.5 349.5v-3.8M1385.5 349.5v-3.8M1390.5 349.5v-3.8M1395.5 349.5v-13.5M1400.5 349.5v-3.8M1405.5 349.5v-3.8M1410.5 349.5v-3.8M1415.5 349.5v-3.8M1420.5 349.5v-8.5M1425.5 349.5v-3.8M1430.5 349.5v-3.8M1435.5 349.5v-3.8M1440.5 349.5v-3.8M1445.5 349.5v-13.5M1450.5 349.5v-3.8M1455.5 349.5v-3.8M1460.5 349.5v-3.8M1465.5 349.5v-3.8M1470.5 349.5v-8.5M1475.5 349.5v-3.8M1480.5 349.5v-3.8M1485.5 349.5v-3.8M1490.5 349.5v-3.8M1495.5 349.5v-13.5M1500.5 349.5v-3.8M1505.5 349.5v-3.8M1510.5 349.5v-3.8M1515.5 349.5v-3.8M1520.5 349.5v-8.5M1525.5 349.5v-3.8M1530.5 349.5v-3.8M1535.5 349.5v-3.8M1540.5 349.5v-3.8" stroke="#adadad" stroke-width="1"/></svg>
<div class="a" style="left:447px;top:331px;font-size:12px;line-height:14px;color:#ababab">0</div>
<div class="a" style="left:497px;top:331px;font-size:12px;line-height:14px;color:#ababab">50</div>
<div class="a" style="left:547px;top:331px;font-size:12px;line-height:14px;color:#ababab">100</div>
<div class="a" style="left:597px;top:331px;font-size:12px;line-height:14px;color:#ababab">150</div>
<div class="a" style="left:647px;top:331px;font-size:12px;line-height:14px;color:#ababab">200</div>
<div class="a" style="left:697px;top:331px;font-size:12px;line-height:14px;color:#ababab">250</div>
<div class="a" style="left:747px;top:331px;font-size:12px;line-height:14px;color:#ababab">300</div>
<div class="a" style="left:797px;top:331px;font-size:12px;line-height:14px;color:#ababab">350</div>
<div class="a" style="left:847px;top:331px;font-size:12px;line-height:14px;color:#ababab">400</div>
<div class="a" style="left:897px;top:331px;font-size:12px;line-height:14px;color:#ababab">450</div>
<div class="a" style="left:947px;top:331px;font-size:12px;line-height:14px;color:#ababab">500</div>
<div class="a" style="left:997px;top:331px;font-size:12px;line-height:14px;color:#ababab">550</div>
<div class="a" style="left:1047px;top:331px;font-size:12px;line-height:14px;color:#ababab">600</div>
<div class="a" style="left:1097px;top:331px;font-size:12px;line-height:14px;color:#ababab">650</div>
<div class="a" style="left:1147px;top:331px;font-size:12px;line-height:14px;color:#ababab">700</div>
<div class="a" style="left:1197px;top:331px;font-size:12px;line-height:14px;color:#ababab">750</div>
<div class="a" style="left:1247px;top:331px;font-size:12px;line-height:14px;color:#ababab">800</div>
<div class="a" style="left:1297px;top:331px;font-size:12px;line-height:14px;color:#ababab">850</div>
<div class="a" style="left:1347px;top:331px;font-size:12px;line-height:14px;color:#ababab">900</div>
<div class="a" style="left:1397px;top:331px;font-size:12px;line-height:14px;color:#ababab">950</div>
<div class="a" style="left:1447px;top:331px;font-size:12px;line-height:14px;color:#ababab">1000</div>
<div class="a" style="left:1497px;top:331px;font-size:12px;line-height:14px;color:#ababab">1050</div>
<div class="a" style="left:368px;top:272px;width:76px;height:469px;background:#fafafa"></div>
<div class="a" style="left:367.500px;top:352px;width:18.500px;height:283px;border:1px solid #b0b0b0;background:#fbfbfb"></div>
<div class="a" style="left:385px;top:360px;width:18px;height:275px;border:1px solid #b0b0b0;background:#fbfbfb"></div>
<div class="a" style="left:402px;top:378px;width:18px;height:51px;border:1px solid #9cb8d0;background:#b4d6f2"></div>
<div class="a" style="left:402px;top:447px;width:18px;height:176px;border:1px solid #b0b0b0;background:#fbfbfb"></div>
<div class="a vt" style="left:366px;top:356px;width:19px;color:#b9b9b9">html</div>
<div class="a vt" style="left:382.500px;top:364px;width:18px;color:#b9b9b9">body</div>
<div class="a vt" style="left:400px;top:382px;width:17px;color:#333">h1</div>
<div class="a vt" style="left:401px;top:450px;width:17px;color:#b9b9b9;font-size:11px">p</div>
<div class="a" style="left:453px;top:373.800px;font-size:49px;line-height:56px;font-weight:700;color:#0b6184">1</div><div class="a" style="left:454px;top:411px;width:9.600px;height:10px;background:#fff"></div><div class="a" style="left:471.300px;top:411px;width:9px;height:10px;background:#fff"></div>
<div class="a" style="left:491.500px;top:373.800px;font-size:49px;line-height:56px;font-weight:700;color:#0b6184">Introduction</div>
<svg class="a" style="left:486px;top:370px" width="12" height="64" viewBox="486 370 12 64"><path d="M491.500 377v50" stroke="#999"/><rect x="489" y="372.500" width="5" height="5" fill="#fff" stroke="#888"/><rect x="489" y="426.500" width="5" height="5" fill="#fff" stroke="#888"/></svg>
<div class="a p" style="left:452.5px;top:448.2px">Lorem<i class="sp"></i>ipsum<i class="sp"></i>dolor<i class="sp"></i>sit</div>
<div class="a p" style="left:452.5px;top:473.2px">magna<i class="sp"></i>aliqua</div>
<div class="a p" style="left:452.5px;top:498.2px">dictum<i class="sp"></i>varius<i class="sp"></i>duis</div>
<div class="a p" style="left:452.5px;top:523.2px">eget<i class="sp"></i>gravida<i class="sp"></i>cum</div>
<div class="a p" style="left:452.5px;top:548.2px">massa<i class="sp"></i>tincidunt</div>
<div class="a p" style="left:452.5px;top:573.2px">accumsan<i class="sp"></i>sit<i class="sp"></i>amet</div>
<div class="a p" style="left:452.5px;top:598.2px">pellentesque</div>
<div class="a p" style="right:150.8px;top:448.2px">amet<i class="sp"></i>dolore<i class="sp"></i></div>
<div class="a p" style="right:130.8px;top:473.2px">aliqua.<i class="sp"></i>Eget<i class="sp"></i>arcu<i class="sp"></i></div>
<div class="a p" style="right:160.3px;top:498.2px">purus.<i class="sp"></i>Elit<i class="sp"></i></div>
<div class="a p" style="right:134.3px;top:523.2px">pellentesque<i class="sp"></i></div>
<div class="a p" style="right:142.3px;top:548.2px">maecenas<i class="sp"></i></div>
<div class="a p" style="right:218.8px;top:573.2px">tellus<i class="sp"></i></div>
<div class="a" style="left:368px;top:741px;width:1174px;height:26px;background:linear-gradient(#fff,#ececec)"></div>
<div class="t" style="left:372px;top:744px;color:#222;letter-spacing:-0.39px">Words: 104</div>
<div class="a" style="left:453px;top:745px;width:1px;height:18px;background:#c4c4c4"></div>
<div class="t" style="left:460px;top:744px;color:#222;letter-spacing:-0.40px">Font Scale: 100%</div>
<div class="a" style="left:368px;top:766px;width:1174px;height:26px;background:linear-gradient(#ececec,#cfcfcf);border-top:1px solid #c6c6c6"></div>
<svg class="a" style="left:368px;top:766px" width="1174" height="26" viewBox="368 766 1174 26"><path d="M380 767C385 767 386 770 388 775L391 782C393 787 394 787.500 398 787.500H453C457 787.500 458 787 460 782L463 775C465 770 466 767 471 767Z" fill="#fff" stroke="#c0c0c0" stroke-width=".8"/><path d="M466 772c2-3 4-4.500 8-4.500h60" fill="none" stroke="#aaa" stroke-width=".8"/><rect x="1496.500" y="771.500" width="14" height="14" fill="#f4f4f4" stroke="#333"/><path d="M1503.500 774.500v8" stroke="#222" stroke-width="1.300"/><rect x="1516.500" y="771.500" width="14" height="14" fill="#f4f4f4" stroke="#333"/><path d="M1518.500 782h10l-5-6z" fill="#111"/></svg>
<div class="t" style="left:394px;top:769.700px;color:#222;font-size:13px;letter-spacing:-0.34px">XML Editor</div>
<div class="t" style="left:475px;top:769.700px;color:#666;font-size:13px;letter-spacing:0.10px">Text Editor</div>
<div class="a" style="left:368px;top:797px;width:1174px;height:26px;background:#ebebeb"></div>
<div class="a" style="left:368px;top:823px;width:1174px;height:34px;background:linear-gradient(#fff 30%,#ececec)"></div>
<svg class="a" style="left:368px;top:797px" width="1174" height="26" viewBox="368 797 1174 26"><g stroke="#555" stroke-width="1.200"><path d="M374 802.500h19M374 807.500h19M374 812.500h19M374 817.500h19"/></g><path d="M1481.700 807.300h10.600l-5.300 5.700z" fill="#555"/><g stroke="#555" stroke-width="1.300" fill="none"><path d="M1505.3 803.5h5.200M1505.9 803.5v8M1509.6 803.5v8M1503.5 811.5h9M1508 811.5v4.600"/><path d="M1524.500 805.300l9 9M1533.500 805.300l-9 9" stroke-width="1.400"/></g></svg>
<div class="t" style="left:399.700px;top:801px;color:#636363;font-weight:700;font-size:15px;letter-spacing:-0.56px">Builds</div>
<div class="t" style="left:380px;top:831px;color:#222;letter-spacing:-0.41px">Clear Finished</div>
<div class="a" style="left:482px;top:827px;width:1px;height:22px;background:#c4c4c4"></div>
<div class="t" style="left:493px;top:831px;color:#222;letter-spacing:-0.40px">View Output</div>
<div class="t" style="left:591.300px;top:831px;color:#222;letter-spacing:-0.16px">Open Build Log</div>
<div class="a" style="left:704px;top:827px;width:1px;height:22px;background:#c4c4c4"></div>
<div class="t" style="left:715px;top:831px;color:#aaa;letter-spacing:-0.34px">Stop Build</div>
<div class="t" style="left:797px;top:831px;color:#222;letter-spacing:-0.18px">Rebuild Target</div>
<div class="t" style="left:907px;top:831px;color:#222;letter-spacing:-0.19px">Build Targets</div>
<div class="a" style="left:1001px;top:827px;width:1px;height:22px;background:#c4c4c4"></div>
<div class="t" style="left:1012.800px;top:831px;color:#222;letter-spacing:-0.12px">Open Output Folder</div>
<div class="t" style="left:1161.400px;top:831px;color:#222;letter-spacing:-0.29px">Clean Target</div>

<!-- FORMAT PANEL -->
<div class="a" style="left:1547px;top:190px;width:82px;height:667px;background:#fff"></div>
<div class="a" style="left:1547px;top:190px;width:82px;height:26px;background:linear-gradient(#f3f3f3,#e6e6e6)"></div>
<div class="a" style="left:1547px;top:216px;width:82px;height:33px;background:linear-gradient(#fafafa,#ececec);border-bottom:1px solid #c8c8c8"></div>
<svg class="a" style="left:1547px;top:190px" width="83" height="130" viewBox="1547 190 83 130"><g stroke="#555" stroke-width="1.200"><path d="M1553 195.500h19M1553 200.500h19M1553 205.500h19M1553 210.500h19"/></g><path d="M1558.500 224.500h-2.500v15h2.500M1569.500 224.500h2.500v15h-2.500" fill="none" stroke="#9a9a9a"/><path d="M1564 225l6 7h-3.500v7h-5v-7h-3.500z" fill="#3aa0e8" stroke="#1f78c0" stroke-width=".8"/><rect x="1550" y="282" width="80" height="31" fill="#eeeeee"/><path d="M1561.500 286.500h9l4 4v14h-13z" fill="#e8f0f4" stroke="#8fa6b8"/><path d="M1564 291h2M1567 291h4M1564 294h2M1567 294h4" stroke="#8aa"/><rect x="1559.500" y="298.500" width="16" height="5" fill="#5b93d6" stroke="#3f78c0" stroke-width=".8"/><rect x="1588.500" y="288.500" width="13" height="15" fill="#e4e4e4" stroke="#999"/><path d="M1590 293h10M1590 297h10" stroke="#999"/><circle cx="1595" cy="296" r="9.500" fill="none" stroke="#e0202a" stroke-width="2"/><path d="M1588.500 302.500l13-13" stroke="#e0202a" stroke-width="2"/><rect x="1614.500" y="287.500" width="16" height="17" fill="#eef2f4" stroke="#999"/><rect x="1614" y="299" width="16" height="5" fill="#2f5fb0"/><circle cx="1627" cy="292" r="5" fill="#b8d84a"/></svg>
<div class="t" style="left:1578.200px;top:194.500px;color:#636363;font-weight:700;font-size:15px">Format</div>
<div class="t" style="left:1582px;top:223px;color:#111">h1</div>
<div class="t" style="left:1556px;top:255px;color:#111">Style Inspector</div>
<div class="t" style="left:1553px;top:320px;color:#f00000;letter-spacing:-0.4px">Local style attributes</div>
<svg class="a" style="left:1561px;top:343px" width="14" height="14"><path d="M7 1v12M1 7h12" stroke="#222" stroke-width="1.400"/></svg>
<div class="a" style="left:1553px;top:364px;width:77px;height:1px;background:#c2c2c2"></div>
<div class="t" style="left:1553px;top:373px;color:#111;letter-spacing:-0.45px">h1.new</div>
<div class="t" style="left:1559px;top:399px;color:#111;letter-spacing:.25px">mc-auto-number-format:</div>
<div class="t" style="left:1559px;top:427px;color:#111;letter-spacing:0px">font-weight:</div>
<div class="t" style="left:1559px;top:454px;color:#111">font-style:</div>
<svg class="a" style="left:1561px;top:479px" width="14" height="14"><path d="M7 1v12M1 7h12" stroke="#222" stroke-width="1.400"/></svg>
<div class="a" style="left:1553px;top:500px;width:77px;height:1px;background:#c2c2c2"></div>
<div class="t" style="left:1553px;top:509px;color:#111">h1</div>
<div class="t" style="left:1559px;top:536px;color:#111">color:</div>
<div class="t" style="left:1559px;top:564px;color:#111">font-size:</div>
<div class="t" style="left:1559px;top:591px;color:#111;text-decoration:line-through;letter-spacing:0px">font-weight:</div>
<div class="t" style="left:1559px;top:619px;color:#111;letter-spacing:.15px">line-height:</div>
<div class="t" style="left:1559px;top:646px;color:#111;letter-spacing:.4px">margin-bottom:</div>
<svg class="a" style="left:1561px;top:670px" width="14" height="14"><path d="M7 1v12M1 7h12" stroke="#222" stroke-width="1.400"/></svg>
<div class="a" style="left:1553px;top:691px;width:77px;height:1px;background:#c2c2c2"></div>
<div class="a" style="left:1553px;top:696px;width:77px;height:22px;background:#e6e6e6"></div>
<div class="t" style="left:1553px;top:698px;color:#111;letter-spacing:.35px">Inherited from</div>
<div class="t" style="left:1553px;top:721px;color:#111">body</div>
<div class="t" style="left:1559px;top:747px;color:#111;text-decoration:line-through">color:</div>
<div class="t" style="left:1559px;top:774px;color:#111;letter-spacing:.35px">font-family:</div>
<div class="t" style="left:1559px;top:801px;color:#111;text-decoration:line-through">font-size:</div>
<div class="t" style="left:1559px;top:829px;color:#111;text-decoration:line-through;letter-spacing:.15px">line-height:</div>


<div class="a" style="left:1396px;top:186px;width:20px;height:656px;background:linear-gradient(to right,rgba(0,0,0,.10),rgba(0,0,0,0))"></div>
<div class="a" id="dlg" style="left:510px;top:182px;width:886px;height:660px;background:#f0f0f0;border:1px solid #6e6e6e;box-shadow:2px 4px 20px 1px rgba(0,0,0,.42)">
<div class="a" style="left:0;top:0;width:884px;height:37px;background:#fff"></div>
</div>
<div class="t" style="left:545px;top:192.500px;color:#111;letter-spacing:-0.12px">Project Properties</div>
<svg class="a" style="left:511px;top:183px" width="884" height="658" viewBox="511 183 884 658">
 <defs><radialGradient id="lg1" cx=".5" cy=".5" r=".5"><stop offset="0" stop-color="#c5d932"/><stop offset="1" stop-color="#8db92a"/></radialGradient></defs>
 <g transform="translate(519.200 184.200) scale(.868)"><circle cx="12.500" cy="19.300" r="11.400" fill="#03607c"/><circle cx="11.600" cy="19.300" r="9" fill="none" stroke="#3b9467" stroke-width="1.600"/><path d="M6.300 26.200Q14.500 22.500 18.600 13.800A8.850 8.850 0 0 1 6.300 26.200z" fill="#c8d91d"/><ellipse cx="13.600" cy="16" rx="7.300" ry="1.550" transform="rotate(-52 13.600 16)" fill="#bcd62a"/></g>
 <path d="M1359.500 194.500l12 12M1371.500 194.500l-12 12" stroke="#111" stroke-width="1.200"/>
 <!-- tab column -->
 <path d="M679.500 232.500H533c-6 0-9.500 3.500-9.500 9.500v158c0 14 5 20 16 23l128.500 22.900c7 1.300 11.500 3.500 11.500 7.500z" fill="#d5d5d5" stroke="#8c8c8c"/>
 <!-- content panel -->
 <path d="M679.500 232.500H1375c4.500 0 6.500 2 6.500 6.500v521c0 4.500-2 6.500-6.500 6.500H687c-5 0-7.500-2.500-7.500-7.500z" fill="#fff" stroke="#8c8c8c"/>
 <!-- selected tab -->
 <path d="M681 355.500H535c-3 0-4.500 1.500-4.500 4.500v28c0 3 1.500 4.500 4.500 4.500h146z" fill="#fff"/><path d="M680 355.500H535c-3 0-4.500 1.500-4.500 4.500v28c0 3 1.500 4.500 4.500 4.500h145" fill="none" stroke="#b4b4b4"/>
 <path d="M531.500 358v31" stroke="#7ab3ea" stroke-width="2.400"/>
 <!-- group boxes -->
 <rect x="704.500" y="268.500" width="649" height="164" fill="none" stroke="#dcdcdc"/>
 <rect x="710" y="262" width="152" height="14" fill="#fff"/>
 <rect x="704.500" y="450.500" width="649" height="140" fill="none" stroke="#dcdcdc"/>
 <rect x="710" y="444" width="74" height="14" fill="#fff"/>
 <!-- inputs -->
 <rect x="835.500" y="289.500" width="289" height="23" fill="#f0f0f0" stroke="#7a7a7a"/>
 <rect x="835.500" y="321.500" width="289" height="23" fill="#f0f0f0" stroke="#7a7a7a"/>
 <rect x="835.500" y="353.500" width="289" height="23" fill="#f0f0f0" stroke="#7a7a7a"/>
 <!-- buttons -->
 <rect x="718" y="395" width="164" height="25" fill="#e1e1e1" stroke="#0078d7" stroke-width="2"/>
 <rect x="893.500" y="394.500" width="158" height="26" fill="#cccccc" stroke="#bfbfbf"/>
 <rect x="1173" y="798" width="90" height="25" fill="#e1e1e1" stroke="#0078d7" stroke-width="2"/>
 <rect x="1274.500" y="797.500" width="91" height="26" fill="#e1e1e1" stroke="#adadad"/>
</svg>
<div class="t" style="left:1303.500px;top:192.500px;color:#111;font-size:16.500px">?</div>
<div class="t d13" style="left:535px;top:251.500px;letter-spacing:-0.22px">General</div>
<div class="t d13" style="left:535px;top:289.500px;letter-spacing:-0.15px">Defaults</div>
<div class="t d13" style="left:535px;top:327.500px;letter-spacing:-0.29px">Language</div>
<div class="t d13" style="left:535px;top:365.500px;font-weight:700;color:#000;letter-spacing:0.19px">Source Control</div>
<div class="t d14" style="left:713px;top:259.500px;letter-spacing:-0.15px">Source Control Provider</div>
<div class="t d14" style="left:719px;top:291.500px;letter-spacing:-0.23px">Provider Name:</div>
<div class="t d14" style="left:719px;top:324px;letter-spacing:-0.31px">Database:</div>
<div class="t d14" style="left:719px;top:356px;letter-spacing:-0.34px">Database Folder:</div>
<div class="t d14" style="left:756.300px;top:399px;letter-spacing:-0.21px">Bind Project...</div>
<div class="t d14 c" style="left:893px;width:159px;top:399px;color:#7c7c7c;letter-spacing:-.2px">Unbind Project</div>
<div class="t d14 g" style="left:713px;top:442px;letter-spacing:-0.38px">Project File</div>
<div class="t d14 g" style="left:715px;top:467px;letter-spacing:0.01px">Use the drop-down menu below to perform source control tasks for the main project file (.flprj) only.</div>
<div class="t d14 g" style="left:719px;top:500px;letter-spacing:-0.09px">Source Control:</div>
<div class="t d14 g" style="left:715px;top:533px;letter-spacing:0.01px">Project is not bound to Source Control.</div>
<div class="t d14 c" style="left:1173px;width:90px;top:802px">OK</div>
<div class="t d14 c" style="left:1274px;width:92px;top:802px;letter-spacing:-.2px">Cancel</div>

<div class="a" id="bottomline" style="left:0;top:855.500px;width:1630px;height:2px;background:#d4d7db"></div>
<div class="a" style="left:1628.800px;top:190px;width:2px;height:667px;background:#ccd0d4"></div>
<div class="badge" style="left:334px;top:10px;text-indent:3.400px">1<i style="left:14px;top:28.300px;width:7.100px;height:3.600px"></i><i style="left:24.600px;top:28.300px;width:6px;height:3.600px"></i></div>
<div class="badge" style="left:1558px;top:47px">2</div>
<div class="badge" style="left:639.900px;top:332.700px">3</div>
<div class="badge" style="left:839.900px;top:399px">4</div>

</body></html>
